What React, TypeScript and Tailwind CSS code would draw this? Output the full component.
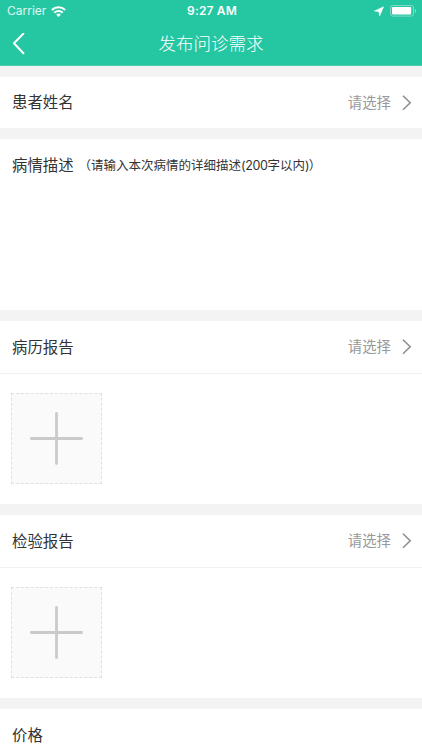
import React from "react";

const StatusBar = () => (
  <div className="flex h-[22px] items-center justify-between pl-[7px] pr-[5px]">
    <div className="flex w-[120px] items-center gap-[5px]">
      <span className="text-[12px] leading-[22px] text-white/85">Carrier</span>
      <svg width="15" height="11" viewBox="0 0 15 11" fill="none" stroke="#fff" strokeWidth="2.1">
        <path d="M.9 4a9.4 9.4 0 0 1 13.2 0" />
        <path d="M3.3 6.7a6 6 0 0 1 8.4 0" />
        <path d="M7.5 11 5.2 8.7a3.2 3.2 0 0 1 4.6 0z" fill="#fff" stroke="none" />
      </svg>
    </div>
    <span className="text-[12px] font-semibold leading-[22px] tracking-[0.15px]">9:27 AM</span>
    <div className="flex w-[120px] items-center justify-end gap-[6px]">
      <svg width="10" height="11" viewBox="0 0 10 11" fill="#fff">
        <path d="M9.6.8 5.6 10 4.9 5.7.4 5z" stroke="#fff" strokeWidth="0.5" strokeLinejoin="round" />
      </svg>
      <svg width="27" height="12" viewBox="0 0 27 12" fill="none">
        <rect x="0.5" y="0.5" width="23" height="10.6" rx="2.2" stroke="#fff" strokeOpacity="0.4" />
        <rect x="2" y="2" width="19.2" height="7.4" rx="0.8" fill="#fff" />
        <path d="M25 4v3.8c1.6-.4 1.6-3.4 0-3.8z" fill="#fff" fillOpacity="0.45" />
      </svg>
    </div>
  </div>
);

const NavBar = ({ title }: { title: string }) => (
  <div className="grid h-[43px] grid-cols-[60px_1fr_60px] items-center">
    <button className="pl-[12px]" aria-label="返回">
      <svg width="14" height="22" viewBox="0 0 14 22" fill="none" stroke="#fff" strokeWidth="2">
        <path d="M11.4 .6 2 10.3l9.4 10" strokeLinecap="round" strokeLinejoin="round" />
      </svg>
    </button>
    <h1 className="text-center text-[17.5px] font-light leading-[26px]">{title}</h1>
  </div>
);

interface SelectRowProps {
  label: string;
  bordered?: boolean;
}

const SelectRow = ({ label, bordered }: SelectRowProps) => (
  <div
    className={
      bordered
        ? "flex h-[53px] items-center justify-between border-b border-[#f1f1f1] pl-[12px] pr-[10px]"
        : "flex h-[51px] items-center justify-between pl-[12px] pr-[10px]"
    }
  >
    <span className="pt-px text-[15.4px] leading-6">{label}</span>
    <div className="flex items-center gap-[11px] text-[#999]">
      <span className="text-[14.4px] leading-6">请选择</span>
      <svg width="10" height="16" viewBox="0 0 10 16" fill="none" stroke="#8f8f8f" strokeWidth="1.6">
        <path d="M1 .8l7.2 7L1 14.8" />
      </svg>
    </div>
  </div>
);

// Dashed tile used to add a picture of the report
const UploadBox = () => (
  <button className="flex h-[91px] w-[91px] items-center justify-center border border-dashed border-[#e0e0e0] bg-[#fafafa]">
    <svg width="53" height="53" viewBox="0 0 53 53" stroke="#cacaca" strokeWidth="2.8" strokeLinecap="round">
      <path d="M26.5 1.4v50.2M1.4 26.5h50.2" />
    </svg>
  </button>
);

const ReportSection = ({ label }: { label: string }) => (
  <section className="h-[183px] shrink-0 bg-white">
    <SelectRow label={label} bordered />
    <div className="pl-[11px] pt-[19px]">
      <UploadBox />
    </div>
  </section>
);

const App: React.FC = () => {
  return (
    <div className="flex h-[750px] flex-col gap-[11px] overflow-hidden bg-[#f3f3f3] font-['Inter','Noto_Sans_CJK_SC',sans-serif] text-[#333]">
      <header className="h-[66px] shrink-0 border-b border-[#4fcbae] bg-[#25c6a2] text-white">
        <StatusBar />
        <NavBar title="发布问诊需求" />
      </header>

      <section className="h-[51px] shrink-0 bg-white">
        <SelectRow label="患者姓名" />
      </section>

      <section className="h-[171px] shrink-0 bg-white">
        <div className="flex h-[53px] items-center pl-[12px]">
          <span className="pt-px text-[15.4px] leading-6">病情描述</span>
          <span className="ml-[5px] whitespace-nowrap pt-px text-[12.5px] leading-6">
            （请输入本次病情的详细描述<span className="tracking-[-0.4px]">(200</span>字以内
            <span className="tracking-[-0.8px]">)</span>）
          </span>
        </div>
      </section>

      <ReportSection label="病历报告" />
      <ReportSection label="检验报告" />

      <section className="flex h-[53px] shrink-0 items-center bg-white pl-[12px]">
        <span className="text-[15.4px] leading-6">价格</span>
      </section>
    </div>
  );
};

export default App;
